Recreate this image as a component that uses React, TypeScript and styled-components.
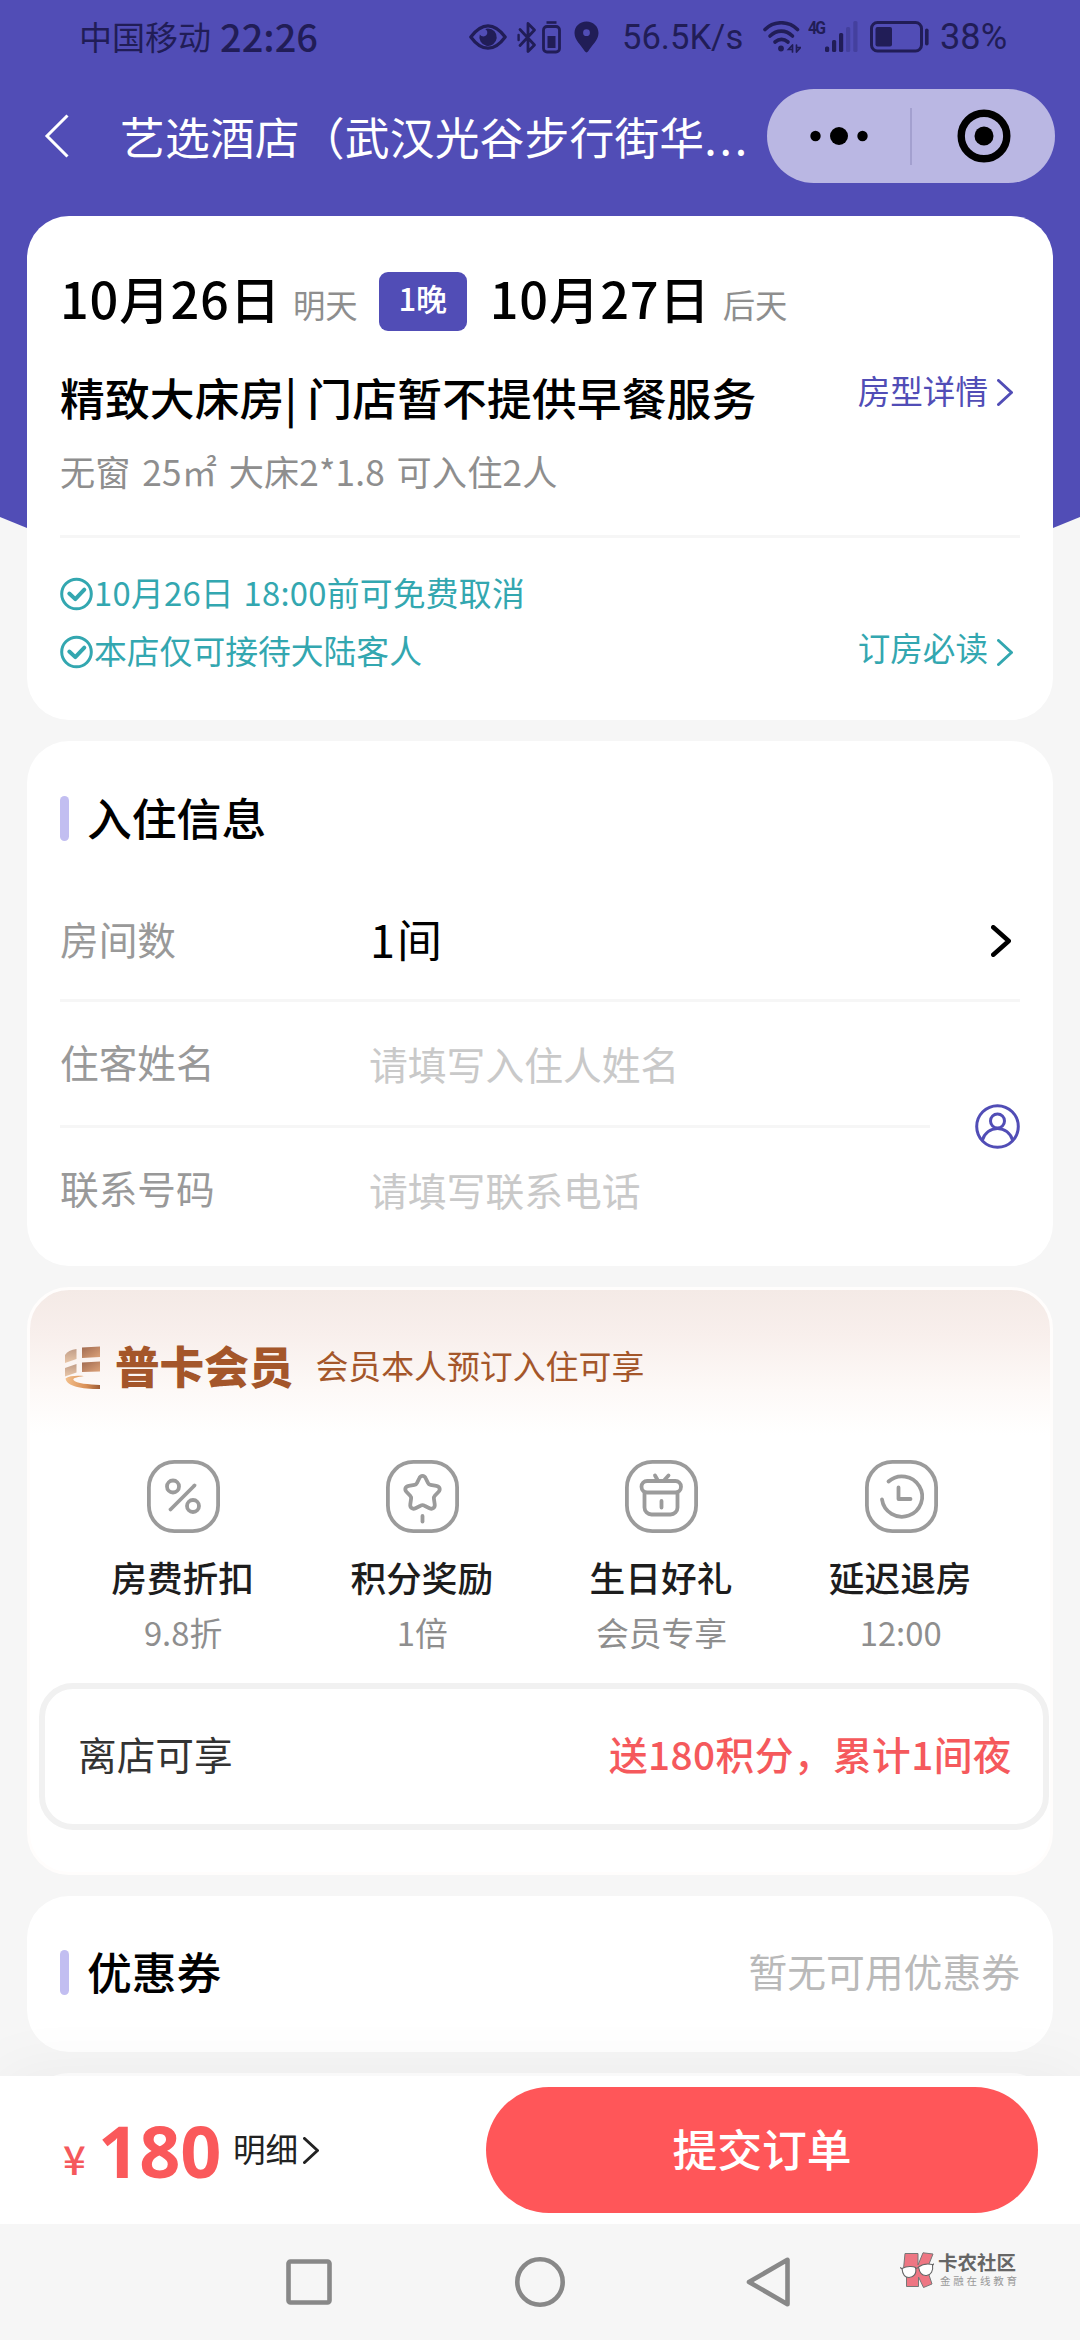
import React from "react";
import styled, { createGlobalStyle } from "styled-components";

const violet = "#514db6";
const teal = "#33a7b0";
const coral = "#ff5659";
const copper = "#a4562a";
const ink = "#211d57";

const GlobalStyle = createGlobalStyle`
  * { box-sizing: border-box; }
  body {
    margin: 0;
    background: #f6f6f6;
    font-family: "Noto Sans CJK SC", "Noto Sans", sans-serif;
    -webkit-font-smoothing: antialiased;
  }
  svg { display: block; flex: none; }
`;

const Screen = styled.div`
  position: relative;
  width: 1080px;
  height: 2340px;
  display: flex;
  flex-direction: column;
  overflow: hidden;
  background: #f6f6f6;
`;

const Backdrop = styled.div`
  position: absolute;
  inset: 0 0 auto 0;
  height: 560px;
  background: ${violet};
  clip-path: polygon(0 0, 100% 0, 100% 517px, 1053px 528px, 900px 555px, 180px 555px, 27px 528px, 0 517px);
`;

const StatusBar = styled.div`
  position: relative;
  height: 74px;
  display: flex;
  align-items: center;
  padding: 0 72px 0 79px;
  color: ${ink};
`;

const Carrier = styled.span`
  font-size: 33px;
  line-height: 72px;
  height: 74px;
`;

const Clock = styled.span`
  margin-left: 9px;
  flex: 1;
  height: 74px;
  font-size: 38px;
  font-weight: 500;
  line-height: 71px;
`;

const StatusText = styled.span<{ $w: number; $size: number }>`
  width: ${(p) => p.$w}px;
  font-family: Roboto, sans-serif;
  font-size: ${(p) => p.$size}px;
  line-height: 78px;
  white-space: nowrap;
`;

const Gap = styled.i<{ $w: number }>`
  flex: none;
  width: ${(p) => p.$w}px;
`;

const NavBar = styled.header`
  position: relative;
  height: 142px;
  padding: 15px 25px 33px 44px;
  display: flex;
  align-items: center;
  color: #fff;
`;

const NavTitle = styled.h1`
  flex: 1;
  margin: 0 0 0 51px;
  font-size: 44.8px;
  font-weight: 400;
  letter-spacing: 0.15px;
  line-height: 90px;
  white-space: nowrap;
`;

const Ellipsis = styled.span`
  letter-spacing: 2.8px;
`;

const Capsule = styled.div`
  width: 288px;
  height: 94px;
  border-radius: 47px;
  background: #bab7e3;
  display: flex;
  align-items: center;
`;

const CapsuleHalf = styled.div`
  flex: 1;
  display: flex;
  align-items: center;
  justify-content: center;
  height: 57px;
  & + & { border-left: 2px solid #a3a0cf; }
`;

const Content = styled.main`
  position: relative;
  flex: 1;
  min-height: 0;
  overflow: hidden;
  padding: 0 27px;
  display: flex;
  flex-direction: column;
  gap: 21px;
`;

const Card = styled.section<{ $h: number }>`
  flex: none;
  height: ${(p) => p.$h}px;
  border-radius: 42px;
  background: #fff;
  padding: 0 33px;
`;

const Row = styled.div<{ $h: number; $top?: number; $between?: boolean }>`
  display: flex;
  align-items: center;
  height: ${(p) => p.$h}px;
  padding-top: ${(p) => p.$top ?? 0}px;
  justify-content: ${(p) => (p.$between ? "space-between" : "flex-start")};
`;

const Divider = styled.hr`
  margin: 0;
  border: 0;
  height: 3px;
  width: 100%;
  background: #f6f6f6;
`;

const DateRow = styled.div`
  display: flex;
  align-items: flex-start;
  height: 133px;
  padding-top: 56px;
`;

const DateText = styled.strong`
  margin-top: -2px;
  font-size: 50.5px;
  font-weight: 500;
  letter-spacing: 0.8px;
  line-height: 54px;
  color: #000;
  white-space: nowrap;
`;

const DayHint = styled.span`
  margin: 5px 0 0 12px;
  font-size: 32.4px;
  line-height: 54px;
  color: #8e8e8e;
`;

const Nights = styled.span`
  width: 88px;
  height: 59px;
  margin: 0 23px 0 21px;
  border-radius: 9px;
  background: ${violet};
  color: #fff;
  font-size: 31px;
  font-weight: 500;
  line-height: 52px;
  text-align: center;
`;

const RoomName = styled.h2`
  margin: 0;
  font-size: 44.8px;
  font-weight: 500;
  letter-spacing: 0.1px;
  line-height: 96px;
  color: #000;
  white-space: nowrap;
`;

const LinkText = styled.a<{ $color: string; $textLift: number; $lift?: number }>`
  display: flex;
  align-items: center;
  gap: 9px;
  padding: 0 7px ${(p) => p.$lift ?? 0}px 0;
  font-size: 32.6px;
  line-height: 40px;
  color: ${(p) => p.$color};
  span { margin-top: -${(p) => p.$textLift}px; }
`;

const RoomSpec = styled.p`
  margin: 0;
  font-size: 35.2px;
  line-height: 54px;
  height: 91px;
  word-spacing: 3.6px;
  letter-spacing: 0.15px;
  color: #8e8e8e;
`;

const Policies = styled.div`
  display: flex;
  justify-content: space-between;
  align-items: flex-end;
  height: 143px;
`;

const Policy = styled.div<{ $track?: number }>`
  display: flex;
  align-items: center;
  gap: 1px;
  height: 58px;
  font-size: 32.8px;
  line-height: 54px;
  letter-spacing: ${(p) => p.$track ?? 0}px;
  word-spacing: 2px;
  color: ${teal};
  white-space: nowrap;
  span { height: 58px; }
`;

const SectionTitle = styled.h3`
  margin: 0;
  display: flex;
  align-items: center;
  gap: 18px;
  font-size: 44.8px;
  font-weight: 500;
  line-height: 60px;
  color: #000;
  &::before {
    content: "";
    width: 9px;
    height: 45px;
    border-radius: 5px;
    background: #c2bef1;
  }
  span { height: 64px; }
`;

const FieldLabel = styled.span`
  width: 309px;
  height: 61px;
  font-size: 38.7px;
  line-height: 56px;
  color: #999;
`;

const FieldValue = styled.span`
  flex: 1;
  height: 60px;
  padding-left: 1px;
  font-size: 45px;
  letter-spacing: 2px;
  line-height: 56px;
  color: #000;
`;

const Placeholder = styled.span`
  height: 57px;
  font-size: 38.8px;
  line-height: 56px;
  color: #c9c9c9;
`;

const GuestArea = styled.div`
  display: flex;
  align-items: center;
  justify-content: space-between;
`;

const GuestFields = styled.div`
  width: 870px;
`;

const MemberCard = styled(Card)`
  padding: 0;
  border: 3px solid #fffdfc;
  background: linear-gradient(180deg, #f4eae6 0, #f8efec 45px, #fdf9f7 100px, #fff 145px);
`;

const MemberHead = styled.div`
  display: flex;
  align-items: center;
  height: 154px;
  padding-left: 35px;
  color: ${copper};
`;

const MemberLevel = styled.strong`
  margin-left: 15px;
  font-size: 44.6px;
  font-weight: 900;
  line-height: 60px;
  height: 65px;
`;

const MemberNote = styled.span`
  margin-left: 22px;
  font-size: 32.9px;
  line-height: 60px;
  height: 64px;
`;

const Perks = styled.div`
  display: grid;
  grid-template-columns: repeat(4, 239.2px);
  margin: 16px 0 0 34px;
  height: 223px;
`;

const Perk = styled.div`
  display: flex;
  flex-direction: column;
  align-items: center;
`;

const PerkName = styled.b`
  margin: 17px 2px 0 0;
  font-size: 35.7px;
  font-weight: 500;
  line-height: 54px;
  color: #1d1d1d;
`;

const PerkValue = styled.span`
  margin: 1px 1px 0 0;
  font-size: 32.8px;
  line-height: 54px;
  color: #8e8e8e;
`;

const Reward = styled.div`
  margin: 0 1px 0 9px;
  height: 147px;
  border: 6px solid #f1f1f1;
  border-radius: 34px;
  background: #fff;
  display: flex;
  align-items: center;
  justify-content: space-between;
  padding: 0 31px 8px 33px;
  font-size: 38.7px;
`;

const RewardLabel = styled.span`
  color: #333;
`;

const RewardValue = styled.span`
  font-weight: 500;
  letter-spacing: 0.45px;
  color: #f5595c;
`;

const NoCoupon = styled.span`
  font-size: 38.8px;
  line-height: 60px;
  height: 65px;
  color: #b9b9b9;
`;

const Checkout = styled.footer`
  position: relative;
  flex: none;
  height: 148px;
  padding: 0 42px 0 63px;
  display: flex;
  align-items: center;
  background: #fff;
  box-shadow: 0 0 70px rgba(0, 0, 0, 0.05);
`;

const Currency = styled.span`
  margin-top: 15px;
  width: 35px;
  font-size: 40px;
  line-height: 60px;
  font-weight: 500;
  color: #f5595c;
`;

const Price = styled.strong`
  width: 135px;
  font-family: "Open Sans", sans-serif;
  font-size: 72px;
  font-weight: 700;
  line-height: 100px;
  color: #fa595b;
`;

const Detail = styled.span`
  flex: 1;
  display: flex;
  align-items: center;
  gap: 5px;
  font-size: 32.6px;
  line-height: 56px;
  color: #222;
  span { height: 60px; }
`;

const Submit = styled.button`
  width: 552px;
  height: 126px;
  border: 0;
  border-radius: 63px;
  padding: 0 0 4px;
  background: ${coral};
  color: #fff;
  font: 500 44.8px / 60px "Noto Sans CJK SC", sans-serif;
`;

const SystemNav = styled.nav`
  position: relative;
  flex: none;
  height: 116px;
  background: #f6f6f6;
  display: flex;
  align-items: center;
  padding: 0 63px 0 286px;
`;

const Brand = styled.div`
  margin: -24px 0 0 auto;
  display: flex;
  align-items: center;
  gap: 4px;
  font-family: "Liberation Sans", "Noto Sans CJK SC", sans-serif;
`;

const BrandText = styled.div`
  display: flex;
  flex-direction: column;
  gap: 1px;
  width: 79px;
  white-space: nowrap;
`;

const BrandName = styled.b`
  font-size: 19.5px;
  font-weight: 700;
  line-height: 20px;
  color: #666;
`;

const BrandSub = styled.span`
  padding-left: 2px;
  font-size: 10.5px;
  letter-spacing: 2.8px;
  line-height: 14px;
  color: #999;
`;

const Chevron = ({ color, w = 16, h = 27, s = 3 }: { color: string; w?: number; h?: number; s?: number }) => (
  <svg width={w} height={h} viewBox={`0 0 ${w} ${h}`} fill="none" stroke={color} strokeWidth={s} strokeLinecap="round" strokeLinejoin="round">
    <path d={`M${s / 2} ${s / 2}L${w - s / 2} ${h / 2}L${s / 2} ${h - s / 2}`} />
  </svg>
);

const CheckCircle = () => (
  <svg width="33" height="34" viewBox="0 0 33 34" fill="none" stroke={teal}>
    <circle cx="16.5" cy="17" r="14.8" strokeWidth="3" />
    <path d="M9.3 16.5l6 5.6 9-9.4" strokeWidth="4" strokeLinecap="round" strokeLinejoin="round" />
  </svg>
);

const EyeIcon = () => (
  <svg width="38" height="26" viewBox="0 0 38 26">
    <path d="M1.800 13C8 4.500 13 1.800 19 1.800S30 4.500 36.200 13C30 21.500 25 24.200 19 24.200S8 21.500 1.800 13Z" fill="none" stroke={ink} strokeWidth="3.200" strokeLinejoin="round" />
    <path d="M19 4.500a8.700 8.700 0 1 1-8.200 6c1.500 2.300 5 2.700 6.700.6 1.500-2 1-4.800-1.300-6.200A8 8 0 0 1 19 4.500Z" fill={ink} />
  </svg>
);

const BluetoothIcon = () => (
  <svg width="20" height="33" viewBox="0 0 20 33" fill="none" stroke={ink} strokeWidth="2.800" strokeLinejoin="round" strokeLinecap="round">
    <path d="M3 8.500l14.500 15.500L11 30.500V2.500L17.500 9 3 24.500" />
    <path d="M1.600 14v5" strokeWidth="2.400" />
  </svg>
);

const DeviceBatteryIcon = () => (
  <svg width="19" height="33" viewBox="0 0 19 33">
    <path d="M4.500 1.500h10" stroke={ink} strokeWidth="2.600" />
    <rect x="1.500" y="5.500" width="16" height="25.500" rx="3.500" fill="none" stroke={ink} strokeWidth="2.800" />
    <rect x="5.500" y="15" width="8" height="12" fill={ink} />
  </svg>
);

const PinIcon = () => (
  <svg width="25" height="32" viewBox="0 0 25 32">
    <path fillRule="evenodd" d="M12.500.5C5.500.5.5 5.700.5 12c0 7 6.500 12 10.300 18.300 1 1.500 2.500 1.500 3.400 0C18 24 24.500 19 24.500 12 24.500 5.700 19.500.5 12.500.5Zm0 7.800a3.400 3.400 0 1 1 0 6.800 3.400 3.400 0 0 1 0-6.800Z" fill={ink} />
  </svg>
);

const WifiIcon = () => (
  <svg width="38" height="32" viewBox="0 0 38 32" fill="none" stroke={ink} strokeWidth="3.600" strokeLinecap="round">
    <path d="M2 8.500C11-.5 25.500-.5 34.500 8.500" />
    <path d="M7 15c7-6.500 15.500-6.500 22.500 0" />
    <path d="M12 21c4.500-3.700 8.500-3.700 13 0" />
    <circle cx="18" cy="27.500" r="2.900" fill={ink} stroke="none" />
    <path d="M29.500 24v7M29.500 24l-4 4.500h4M33.500 31v-7M33.500 31l4-4.500h-4" strokeWidth="1.700" />
  </svg>
);

const Network = styled.span`
  align-self: flex-start;
  margin-top: 18px;
  width: 17px;
  font: 700 18.500px / 20px Roboto, sans-serif;
  letter-spacing: -2px;
  transform: scaleX(0.85);
  transform-origin: left;
`;

const SignalIcon = () => (
  <svg width="33" height="32" viewBox="0 0 33 32" fill={ink}>
    <rect x="0" y="25.500" width="4.200" height="5.500" rx="1.500" />
    <rect x="7" y="19" width="4.200" height="12" rx="1.500" />
    <rect x="14" y="12" width="4.200" height="19" rx="1.500" />
    <rect x="21" y="6" width="4.200" height="25" rx="1.500" opacity=".25" />
    <rect x="28.300" y="0" width="4.200" height="31" rx="1.500" opacity=".25" />
  </svg>
);

const BatteryIcon = () => (
  <svg width="59" height="32" viewBox="0 0 59 32">
    <rect x="1.500" y="1.500" width="50" height="28.500" rx="6" fill="none" stroke={ink} strokeWidth="3" />
    <rect x="5.500" y="6" width="16.500" height="19.500" rx="2" fill={ink} />
    <rect x="55" y="7.500" width="3.600" height="17" rx="1.800" fill={ink} />
  </svg>
);

const UserIcon = () => (
  <svg width="45" height="45" viewBox="0 0 45 45" fill="none" stroke={violet} strokeWidth="3">
    <circle cx="22.500" cy="22.500" r="20.800" />
    <circle cx="22.500" cy="17" r="7" />
    <path d="M7.200 36.500C9.500 29 15.500 24.500 22.500 24.500S35.500 29 37.800 36.500" />
  </svg>
);

const LevelIcon = () => (
  <svg width="35" height="43" viewBox="0 0 35 43">
    <defs>
      <linearGradient id="tile" x1="0" y1="0" x2="1" y2="1">
        <stop offset="0" stopColor="#a06a50" />
        <stop offset="1" stopColor="#dda37a" />
      </linearGradient>
      <linearGradient id="tileSoft" x1="0" y1="0" x2="0" y2="1">
        <stop offset="0" stopColor="#c19d87" />
        <stop offset="1" stopColor="#e8c6a8" />
      </linearGradient>
      <linearGradient id="swoosh" x1="0" y1="0" x2="1" y2="0">
        <stop offset="0" stopColor="#f3c08c" />
        <stop offset="0.6" stopColor="#d98f55" />
        <stop offset="1" stopColor="#9c5c36" />
      </linearGradient>
    </defs>
    <path d="M11.500 3v10L0 17V9C2 5.500 6 3.500 11.500 3Z" fill="url(#tileSoft)" />
    <path d="M17 1.500L35 .5v10.500l-18 1Z" fill="url(#tile)" />
    <path d="M11.500 18v8.500L0 30.500V22Z" fill="url(#tileSoft)" />
    <path d="M17 16.500l18-1v10l-18 .5Z" fill="url(#tile)" />
    <path d="M.5 32.500C4 29.500 12 29.500 19 30 12 31 7.500 32 8.500 34 11 37.500 24 38.500 35 39V43C16 43 2 40.500.5 32.500Z" fill="url(#swoosh)" />
  </svg>
);

const PerkFrame = ({ children }: { children: React.ReactNode }) => (
  <svg width="73" height="73" viewBox="0 0 73 73" fill="none" stroke="#9b9b9b" strokeWidth="3.800" strokeLinecap="round" strokeLinejoin="round">
    <rect x="1.900" y="1.900" width="69.200" height="69.200" rx="25.500" />
    {children}
  </svg>
);

const perks = [
  {
    name: "房费折扣",
    value: "9.8折",
    art: (
      <>
        <circle cx="26" cy="26.500" r="6" />
        <circle cx="46" cy="46" r="6" />
        <path d="M47.500 25.500L23.500 49.500" />
      </>
    ),
  },
  {
    name: "积分奖励",
    value: "1倍",
    art: (
      <>
        <path d="M33.300 18.200C34.700 15 38.300 15 39.700 18.200L42 23C42.500 24.100 43.300 24.700 44.500 24.900L50.300 25.800C53.700 26.400 54.800 29.600 52.400 32L48.800 35.800C48 36.700 47.700 37.600 47.900 38.800L48.700 44.200C49.200 47.700 46.500 49.700 43.500 48.200L38.500 45.700C37.200 45 35.800 45 34.500 45.700L29.500 48.200C26.500 49.700 23.800 47.700 24.300 44.200L25.100 38.800C25.300 37.600 25 36.700 24.200 35.800L20.600 32C18.200 29.600 19.300 26.400 22.700 25.800L28.500 24.900C29.700 24.700 30.500 24.100 31 23Z" />
        <path d="M36.500 56v5.500" />
      </>
    ),
  },
  {
    name: "生日好礼",
    value: "会员专享",
    art: (
      <>
        <rect x="16.500" y="21" width="39.500" height="11.500" rx="5.700" />
        <path d="M19.500 32.500V47.500a7 7 0 0 0 7 7h19a7 7 0 0 0 7-7V32.500M36.500 41v6.500M30 15.500l2.300 4M43.500 15.500l-4.500 5" />
      </>
    ),
  },
  {
    name: "延迟退房",
    value: "12:00",
    art: <path d="M23.500 21.500A20.200 20.200 0 1 1 17 39.500M33.500 27.500V39H45.500" />,
  },
];

const BrandMark = () => (
  <svg width="34" height="36" viewBox="0 0 34 36">
    <path d="M5 1.500H18V13L23 .8 33 2 27 17 32 32 23.500 35.500 18.500 25V34.500H6.500V22L3.500 17Z" fill="#ee7683" stroke="#777" strokeLinejoin="round" />
    <g fill="#fff" stroke="#666" strokeWidth="1.100">
      <path d="M2 16.500C7 14 13 14 15.500 15.500 17 22 13.500 25.500 9 25.500S2.500 22 2 16.500Z" />
      <path d="M18.500 15C22.500 12 28 11.500 32.500 12.500 33.500 19 31 23 26.500 23.500S19.500 20.500 18.500 15Z" />
      <path d="M15.500 16.500l3.300-1M0 15.500l2.500 1.500M32.500 13.500l1.500-2" />
    </g>
  </svg>
);

export default function App() {
  return (
    <Screen lang="zh-CN">
      <GlobalStyle />
      <Backdrop />
      <StatusBar>
        <Carrier>中国移动</Carrier>
        <Clock>22:26</Clock>
        <EyeIcon />
        <Gap $w={10} />
        <BluetoothIcon />
        <Gap $w={5} />
        <DeviceBatteryIcon />
        <Gap $w={13} />
        <PinIcon />
        <Gap $w={23} />
        <StatusText $w={141} $size={34.6}>56.5K/s</StatusText>
        <WifiIcon />
        <Gap $w={7} />
        <Network>4G</Network>
        <SignalIcon />
        <Gap $w={12} />
        <BatteryIcon />
        <Gap $w={11} />
        <StatusText $w={68} $size={36.2}>38%</StatusText>
      </StatusBar>
      <NavBar>
        <svg width="25" height="44" viewBox="0 0 25 44" fill="none" stroke="#fff" strokeWidth="3">
          <path d="M23.500 1.500L3 22L23.500 42.500" />
        </svg>
        <NavTitle>
          艺选酒店（武汉光谷步行街华<Ellipsis>...</Ellipsis>
        </NavTitle>
        <Capsule>
          <CapsuleHalf>
            <svg width="58" height="20" viewBox="0 0 58 20">
              <circle cx="5.500" cy="10" r="5.200" />
              <circle cx="29" cy="10" r="9" />
              <circle cx="52.500" cy="10" r="5.200" />
            </svg>
          </CapsuleHalf>
          <CapsuleHalf>
            <svg width="54" height="54" viewBox="0 0 54 54">
              <circle cx="27" cy="27" r="22.800" fill="none" stroke="#000" strokeWidth="7.400" />
              <circle cx="27" cy="27" r="9.500" />
            </svg>
          </CapsuleHalf>
        </Capsule>
      </NavBar>

      <Content>
        <Card $h={504}>
          <DateRow>
            <DateText>10月26日</DateText>
            <DayHint>明天</DayHint>
            <Nights>1晚</Nights>
            <DateText>10月27日</DateText>
            <DayHint>后天</DayHint>
          </DateRow>
          <Row $h={95} $between>
            <RoomName>精致大床房| 门店暂不提供早餐服务</RoomName>
            <LinkText $color={violet} $textLift={4} $lift={9}>
              <span>房型详情</span>
              <Chevron color={violet} />
            </LinkText>
          </Row>
          <RoomSpec>无窗 25㎡ 大床2*1.8 可入住2人</RoomSpec>
          <Divider />
          <Policies>
            <div>
              <Policy $track={0.25}>
                <CheckCircle />
                <span>10月26日 18:00前可免费取消</span>
              </Policy>
              <Policy>
                <CheckCircle />
                <span>本店仅可接待大陆客人</span>
              </Policy>
            </div>
            <Row $h={58}>
              <LinkText $color={teal} $textLift={11}>
                <span>订房必读</span>
                <Chevron color={teal} />
              </LinkText>
            </Row>
          </Policies>
        </Card>

        <Card $h={525}>
          <Row $h={138} $top={17}>
            <SectionTitle>
              <span>入住信息</span>
            </SectionTitle>
          </Row>
          <Row $h={120} $top={3}>
            <FieldLabel>房间数</FieldLabel>
            <FieldValue>1间</FieldValue>
            <Chevron color="#000" w={20} h={32} s={4.5} />
            <Gap $w={9} />
          </Row>
          <Divider />
          <GuestArea>
            <GuestFields>
              <Row $h={123}>
                <FieldLabel>住客姓名</FieldLabel>
                <Placeholder>请填写入住人姓名</Placeholder>
              </Row>
              <Divider />
              <Row $h={123}>
                <FieldLabel>联系号码</FieldLabel>
                <Placeholder>请填写联系电话</Placeholder>
              </Row>
            </GuestFields>
            <UserIcon />
          </GuestArea>
        </Card>

        <MemberCard $h={588}>
          <MemberHead>
            <LevelIcon />
            <MemberLevel>普卡会员</MemberLevel>
            <MemberNote>会员本人预订入住可享</MemberNote>
          </MemberHead>
          <Perks>
            {perks.map((perk) => (
              <Perk key={perk.name}>
                <PerkFrame>{perk.art}</PerkFrame>
                <PerkName>{perk.name}</PerkName>
                <PerkValue>{perk.value}</PerkValue>
              </Perk>
            ))}
          </Perks>
          <Reward>
            <RewardLabel>离店可享</RewardLabel>
            <RewardValue>送180积分，累计1间夜</RewardValue>
          </Reward>
        </MemberCard>

        <Card $h={156}>
          <Row $h={153} $between>
            <SectionTitle>
              <span>优惠券</span>
            </SectionTitle>
            <NoCoupon>暂无可用优惠券</NoCoupon>
          </Row>
        </Card>
        <Card $h={156} />
      </Content>

      <Checkout>
        <Currency>¥</Currency>
        <Price>180</Price>
        <Detail>
          <span>明细</span>
          <Chevron color="#222" />
        </Detail>
        <Submit>提交订单</Submit>
      </Checkout>

      <SystemNav>
        <svg width="46" height="46" viewBox="0 0 46 46" fill="none" stroke="#888" strokeWidth="4.600">
          <rect x="2.500" y="2.500" width="41" height="41" rx="2" />
        </svg>
        <Gap $w={183} />
        <svg width="50" height="50" viewBox="0 0 50 50" fill="none" stroke="#888" strokeWidth="4.600">
          <circle cx="25" cy="25" r="22.700" />
        </svg>
        <Gap $w={181} />
        <svg width="45" height="50" viewBox="0 0 45 50" fill="none" stroke="#888" strokeWidth="4.600" strokeLinejoin="round">
          <path d="M41.500 2.800V47.200L3 25Z" />
        </svg>
        <Brand>
          <BrandMark />
          <BrandText>
            <BrandName>卡农社区</BrandName>
            <BrandSub>金融在线教育</BrandSub>
          </BrandText>
        </Brand>
      </SystemNav>
    </Screen>
  );
}
